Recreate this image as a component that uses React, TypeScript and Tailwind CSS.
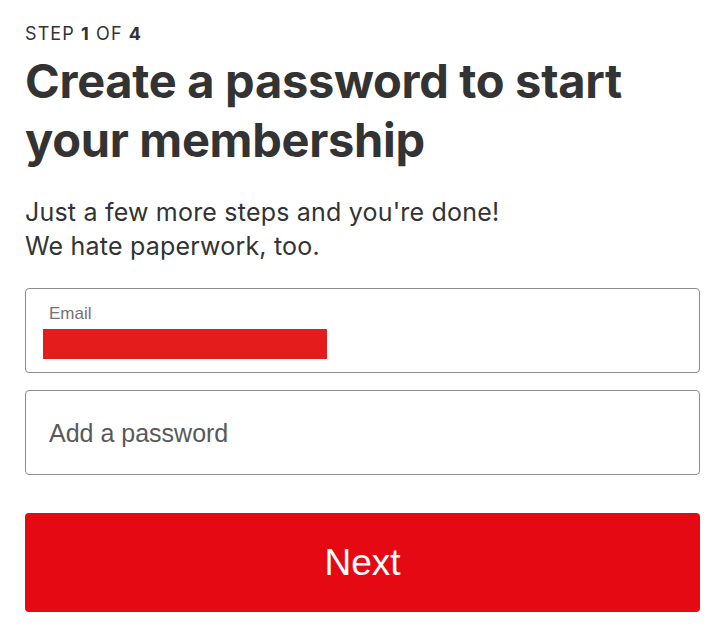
export default function App() {
  return (
    <div className="min-h-screen bg-white pl-[25px] pr-[24px] pt-[22px] font-['Inter',sans-serif] text-[#333]">
      {/* Step indicator */}
      <p className="text-[18px] leading-[24px] tracking-[1.1px]">
        STEP <span className="font-bold">1</span> OF <span className="font-bold">4</span>
      </p>

      {/* Title */}
      <h1 className="mt-[5px] text-[47px] font-bold leading-[59px] tracking-[-0.3px]">
        Create a password to start your membership
      </h1>

      {/* Subtitle */}
      <p className="mt-[26px] text-[25px] leading-[34px] tracking-[0.2px]">
        Just a few more steps and you're done!
        <br />
        We hate paperwork, too.
      </p>

      {/* Email field (filled, value redacted) */}
      <div className="mt-[25px] flex h-[85px] flex-col rounded-[4px] border border-[#8c8c8c] pl-[23px] pt-[15px] font-['Liberation_Sans',Arial,sans-serif]">
        <span className="text-[17px] leading-[20px] text-[#737373]">Email</span>
        <div className="-ml-[6px] mt-[5px] h-[30px] w-[284px] bg-[#e51c1c]" />
      </div>

      {/* Password field */}
      <div className="mt-[17px] h-[85px] rounded-[4px] border border-[#8c8c8c] pl-[23px] pt-[27px] font-['Liberation_Sans',Arial,sans-serif]">
        <span className="text-[25px] leading-[30px] text-[#595959]">Add a password</span>
      </div>

      {/* Next button */}
      <button className="mt-[38px] flex h-[99px] w-full items-center justify-center rounded-[4px] bg-[#e50914] font-['Liberation_Sans',Arial,sans-serif] text-[37px] text-white">
        Next
      </button>
    </div>
  );
}
